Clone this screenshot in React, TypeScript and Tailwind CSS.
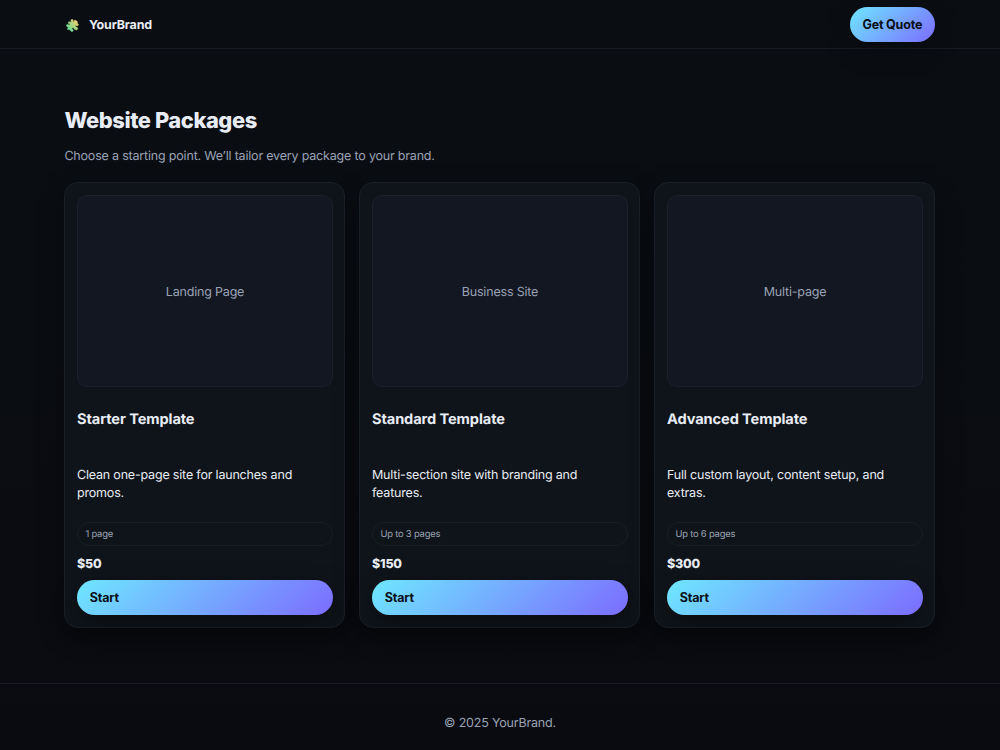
const packages = [
  { preview: 'Landing Page', title: 'Starter Template', text: 'Clean one-page site for launches and promos.', pages: '1 page', price: '$50' },
  { preview: 'Business Site', title: 'Standard Template', text: 'Multi-section site with branding and features.', pages: 'Up to 3 pages', price: '$150' },
  { preview: 'Multi-page', title: 'Advanced Template', text: 'Full custom layout, content setup, and extras.', pages: 'Up to 6 pages', price: '$300' },
];

function PuzzleIcon() {
  return (
    <svg viewBox="0 0 24 24" className="h-[13px] w-[13px]">
      <defs>
        <linearGradient id="puzzle" x1="0.9" y1="0.1" x2="0.1" y2="0.9">
          <stop offset="0.1" stopColor="#e8d070" />
          <stop offset="0.85" stopColor="#6fdc92" />
        </linearGradient>
      </defs>
      <path
        fill="url(#puzzle)"
        stroke="url(#puzzle)"
        strokeWidth="0.900"
        d="M5 5L9.500 6C10.500 5.500 8 3 9.500 1.500C11 .2 13.500 1 13.500 3C13.500 4.500 12.600 6 14 6L16 2L20.500 4C22 5 20 7.500 21.500 8.500C23.500 9 23.500 12 21.500 12.500C20 13 18.500 11 17.500 12.500C17 14 18.500 14.500 20 15L22 17L20 20.500L15.500 19C14 18 15 16.500 13.500 16C11.500 15.700 10.500 17 11.500 18.500C12.500 20 14 20.500 13 22C11.500 24 9 23 8.500 21.500C8 20 7.500 19.500 6 20L2.500 19L4 15.500C4 14 1.500 14.500 .8 13C.2 11 2 9.500 3.800 10.300C5 10.800 6.500 12 7 10.500C7.300 9 5.500 8.500 4 8Z"
      />
    </svg>
  );
}

export default function App() {
  return (
    <div className="flex h-[750px] flex-col overflow-hidden bg-linear-to-b from-[#0a0e13] to-[#0a0b10] font-['Inter',sans-serif] text-[12.500px] leading-[18px] tracking-[-0.015em] text-[#e8ecf4] [text-rendering:geometricPrecision]">
      <header className="h-[49px] shrink-0 border-b border-[#181c23]">
        <div className="ml-[64px] flex h-full w-[871px] items-center justify-between">
          <div className="flex items-center gap-[10px] pt-[2px] pl-[2px] font-bold">
            <PuzzleIcon />
            <span className="pt-px">YourBrand</span>
          </div>
          <button className="h-[35px] rounded-full bg-[linear-gradient(135deg,#6ee7ff,#7c6cff)] px-[12.800px] pt-[2px] font-bold text-[#0a0e16] shadow-[0_8px_24px_rgba(0,0,0,0.35)]">Get Quote</button>
        </div>
      </header>
      <main className="ml-[64px] w-[871px] pt-[58px]">
        <h1 className="pl-[0.400px] text-[21.900px] leading-[28px] font-extrabold tracking-[-0.020em]">Website Packages</h1>
        <p className="mt-[13px] pl-[0.400px] text-[#9aa3b5]">Choose a starting point. We’ll tailor every package to your brand.</p>
        <div className="mt-[16px] grid grid-cols-3 gap-[14px]">
          {packages.map((p) => (
            <article key={p.title} className="flex h-[446px] flex-col rounded-[14px] border border-[#1a1f27] bg-[#0f141a] p-[12px] shadow-[0_8px_24px_rgba(0,0,0,0.35)]">
              <div className="-mr-px flex h-[192px] shrink-0 items-center justify-center rounded-[10px] border border-[#1b202a] bg-[#121721] pt-[3px] text-[#9aa3b5]">{p.preview}</div>
              <h2 className="mt-[22px] text-[14.600px] leading-[20px] font-bold tracking-[-0.007em]">{p.title}</h2>
              <p className="mt-[38px]">{p.text}</p>
              <div className="mt-[18.500px] -mr-px flex h-[25px] items-center rounded-full border border-[#191e26] px-[7.400px] pt-[2px] text-[9.400px] text-[#9aa3b5]">{p.pages}</div>
              <div className="mt-[9.500px] font-extrabold">{p.price}</div>
              <button className="mt-[6px] -mr-px h-[36px] rounded-full bg-[linear-gradient(135deg,#6ee7ff,#7c6cff)] px-[12.800px] pt-[2px] text-left font-bold text-[#0a0e16] shadow-[0_8px_24px_rgba(0,0,0,0.35)]">Start</button>
            </article>
          ))}
        </div>
      </main>
      <footer className="mt-[55px] h-[67px] border-t border-[#171b22] pt-[31px] text-center text-[#9aa3b5]">© 2025 YourBrand.</footer>
    </div>
  );
}
